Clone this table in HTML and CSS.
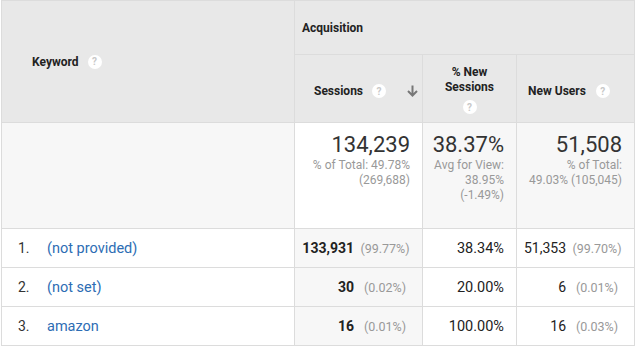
FILE: index.html
```html
<!DOCTYPE html>
<html>
<head>
<meta charset="utf-8">
<link rel="stylesheet" href="styles.css">
</head>
<body>
<div class="wrap">
<table class="report">
  <colgroup>
    <col class="c-key">
    <col class="c-ses">
    <col class="c-new">
    <col class="c-usr">
  </colgroup>
  <thead>
    <tr class="h1">
      <th class="kw" rowspan="2"><span class="hl">Keyword<span class="q">?</span></span></th>
      <th class="acq" colspan="3">Acquisition</th>
    </tr>
    <tr class="h2">
      <th class="ses"><span class="hl">Sessions<span class="q">?</span><svg class="arrow" width="11" height="12" viewBox="0 0 11 12"><path d="M5.5 0.5v9.5M1 6l4.5 4.5L10 6" fill="none" stroke="#777" stroke-width="2"/></svg></span></th>
      <th class="pnew"><div class="stack">% New<br>Sessions<span class="q">?</span></div></th>
      <th class="nu"><span class="hl">New Users<span class="q">?</span></span></th>
    </tr>
  </thead>
  <tbody>
    <tr class="sum">
      <td class="sum-key"></td>
      <td class="sum-ses"><div class="big">134,239</div><div class="sub">% of Total: 49.78%<br>(269,688)</div></td>
      <td class="sum-g"><div class="big">38.37%</div><div class="sub">Avg for View:<br>38.95%<br>(-1.49%)</div></td>
      <td class="sum-g"><div class="big">51,508</div><div class="sub">% of Total:<br>49.03% (105,045)</div></td>
    </tr>
    <tr class="row">
      <td class="key"><span class="idx">1.</span><a class="link">(not provided)</a></td>
      <td class="sesv"><div class="pair"><b>133,931</b><span class="pct">(99.77%)</span></div></td>
      <td class="num">38.34%</td>
      <td class="usr"><div class="pair"><span>51,353</span><span class="pct">(99.70%)</span></div></td>
    </tr>
    <tr class="row">
      <td class="key"><span class="idx">2.</span><a class="link">(not set)</a></td>
      <td class="sesv"><div class="pair"><b>30</b><span class="pct">(0.02%)</span></div></td>
      <td class="num">20.00%</td>
      <td class="usr"><div class="pair"><span>6</span><span class="pct">(0.01%)</span></div></td>
    </tr>
    <tr class="row">
      <td class="key"><span class="idx">3.</span><a class="link">amazon</a></td>
      <td class="sesv"><div class="pair"><b>16</b><span class="pct">(0.01%)</span></div></td>
      <td class="num">100.00%</td>
      <td class="usr"><div class="pair"><span>16</span><span class="pct">(0.03%)</span></div></td>
    </tr>
  </tbody>
</table>
</div>
</body>
</html>
```
FILE: styles.css
```css
* { box-sizing: border-box; }
html, body { margin: 0; padding: 0; background: #fff; }
body { font-family: Roboto, "Liberation Sans", Arial, sans-serif; color: #222; }
.wrap { padding: 0 1px 0 1px; }
.report {
  border-collapse: collapse;
  table-layout: fixed;
  width: 633px;
}
.c-key { width: 293px; }
.c-ses { width: 128px; }
.c-new { width: 94px; }
.c-usr { width: 118px; }
.report th, .report td {
  border: 1px solid #dcdcdc;
  padding: 0;
}
.report thead th {
  background: #e8e8e8;
  font-size: 12px;
  font-weight: 700;
  color: #222;
  text-align: left;
}
.h1 { height: 54px; }
.h2 { height: 68px; }
.report .kw { padding-left: 30px; vertical-align: middle; }
.report .acq { padding-left: 7px; vertical-align: middle; }
.hl { display: inline-flex; align-items: center; }
.q {
  display: inline-flex; align-items: center; justify-content: center;
  width: 14px; height: 14px; border-radius: 50%;
  background: #fff; color: #c8c8c8;
  font-size: 10px; font-weight: 700;
  margin-left: 9px;
}
.report .ses { padding: 5px 0 0 19px; }
.ses .arrow { margin-left: 21px; }
.report .pnew { text-align: center; }
.stack { display: flex; flex-direction: column; align-items: center; line-height: 15px; padding-top: 2px; }
.stack .q { margin: 5px 0 0 0; }
.report .nu { padding: 5px 0 0 11px; }
.nu .q { margin-left: 10px; }

.sum { height: 106px; }
.report .sum td { vertical-align: top; text-align: right; padding: 9px 12px 0 0; }
.sum-key { background: #f7f7f7; }
.sum-ses { background: #fff; }
.sum-g { background: #f7f7f7; }
.big { font-size: 22px; color: #333; line-height: 26px; }
.sub { font-size: 12px; color: #999; line-height: 15px; }

.row { height: 39px; }
.row td { font-size: 14px; vertical-align: middle; }
.report .key { padding-left: 16px; }
.idx { display: inline-block; width: 29px; color: #333; }
.link { color: #2d6db4; text-decoration: none; font-size: 14.5px; }
.report .sesv { background: #f7f7f7; padding-right: 8px; }
.pair { display: flex; justify-content: flex-end; align-items: baseline; }
.pair b { font-weight: 700; color: #222; }
.pct { width: 58px; text-align: center; font-size: 12.5px; color: #999; margin-left: 2px; }
.report .num { text-align: right; padding-right: 12px; color: #222; font-size: 14.5px; }
.report .usr { padding-right: 8px; }
```
